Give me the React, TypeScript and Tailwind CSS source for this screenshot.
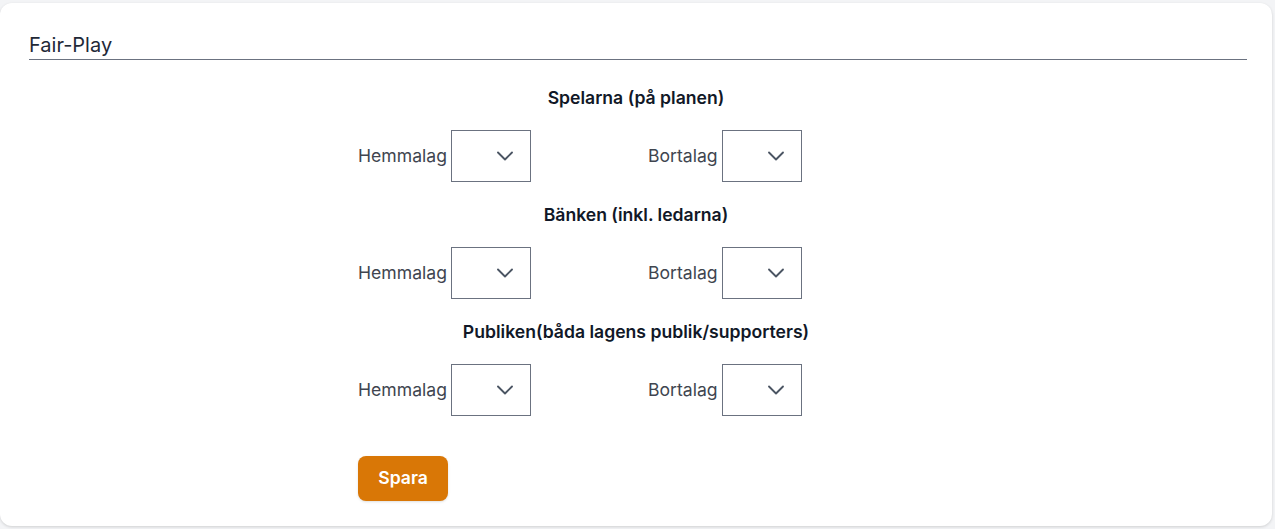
import { ChevronDown } from 'lucide-react';

const SECTIONS = [
  'Spelarna (på planen)',
  'Bänken (inkl. ledarna)',
  'Publiken(båda lagens publik/supporters)',
];

function Select() {
  return (
    <div className="relative w-20 h-[52px] border border-[#6b7280] bg-white">
      <ChevronDown className="absolute right-[11px] top-1/2 -translate-y-1/2 w-[28px] h-[28px] text-[#4b5563]" strokeWidth={1.6} />
    </div>
  );
}

function ScoreRow() {
  return (
    <div className="flex items-center mt-5 w-[556px]">
      <div className="flex items-center w-[278px]">
        <span className="text-[17.6px] text-[#40454f] w-[93px]">Hemmalag</span>
        <Select />
      </div>
      <div className="flex items-center pl-3">
        <span className="text-[17.6px] text-[#40454f] w-[74px]">Bortalag</span>
        <Select />
      </div>
    </div>
  );
}

export default function App() {
  return (
    <div className="min-h-[529px] bg-gray-100 pt-[3px] pb-[3px] pr-[3px]" style={{ fontFamily: 'Inter, "Noto Sans", sans-serif' }}>
      <div className="bg-white rounded-xl shadow-[0_1px_3px_rgba(0,0,0,0.15)] h-[523px] pl-[29px] pr-[25px] pt-[28px]">
        <h2 className="text-[20px] leading-7 text-[#1f2937] border-b border-[#6b7280]">Fair-Play</h2>

        <div className="flex flex-col items-center">
          <div className="w-[556px] mr-[4px]">
            {SECTIONS.map((title, i) => (
              <div key={title} className={i === 0 ? 'mt-[26px]' : 'mt-[21px]'}>
                <h3 className="text-[17.6px] leading-6 font-semibold text-[#111827] text-center">{title}</h3>
                <ScoreRow />
              </div>
            ))}
            <button className="mt-10 w-[90px] h-[45px] rounded-lg bg-[#d97706] text-white font-semibold text-[17.6px] shadow-sm">
              Spara
            </button>
          </div>
        </div>
      </div>
    </div>
  );
}
